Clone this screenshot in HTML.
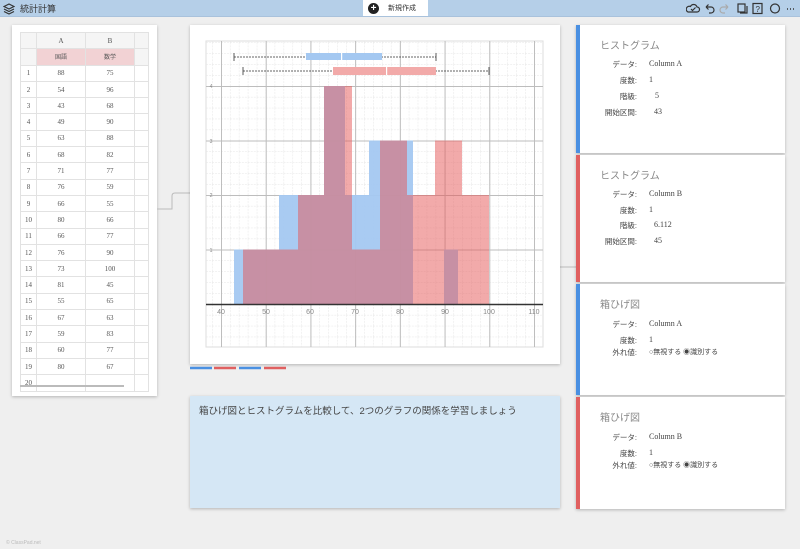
<!DOCTYPE html>
<html><head><meta charset="utf-8"><style>
*{box-sizing:border-box;margin:0;padding:0}
body{width:800px;height:549px;overflow:hidden;background:#efefef;font-family:"Liberation Serif","Noto Serif CJK SC",serif;color:#333;position:relative}
.top{position:absolute;left:0;top:0;width:800px;height:17px;background:#b5cfe8;border-bottom:1px solid #a9c2dc}
.jp{font-family:"Liberation Sans","Noto Sans CJK JP",sans-serif}
.card{position:absolute;background:#fff;box-shadow:0 1px 3px rgba(0,0,0,.25)}
table{border-collapse:collapse;position:absolute;left:8px;top:7px;font-size:7px;color:#555}
td{border:1px solid #e2e2e2;height:16.3px;text-align:center}
.rc{position:absolute;left:576px;width:209px;background:#fff;box-shadow:0 1px 3px rgba(0,0,0,.25)}
.rc .t{position:absolute;left:20px;top:12px;font-size:10px;color:#888}
.rc .l{position:absolute;right:148px;font-size:7.5px;color:#444;text-align:right;white-space:nowrap}
.rc .v{position:absolute;left:69px;font-size:8px;color:#444;white-space:nowrap}
</style></head><body>
<div class="top">
 <svg style="position:absolute;left:3px;top:3px" width="12" height="12" viewBox="0 0 12 12" fill="none" stroke="#333" stroke-width="1.2"><path d="M6 1L11 3.5 6 6 1 3.5Z"/><path d="M1 6L6 8.5 11 6"/><path d="M1 8.5L6 11 11 8.5"/></svg>
 <div class="jp" style="position:absolute;left:20px;top:2px;font-size:9px;color:#333">統計計算</div>
 <div style="position:absolute;left:363px;top:0;width:65px;height:16px;background:#fff"></div>
 <div style="position:absolute;left:368px;top:3px;width:11px;height:11px;border-radius:50%;background:#222;color:#fff;font:bold 10px/11px 'Liberation Sans';text-align:center">+</div>
 <div class="jp" style="position:absolute;left:388px;top:3px;font-size:7px;color:#333">新規作成</div>
 <svg style="position:absolute;left:686px;top:2px" width="112" height="13" viewBox="0 0 112 13" fill="none" stroke="#333" stroke-width="1.2">
  <path d="M2 10h9a2.5 2.5 0 0 0 0-5 3.5 3.5 0 0 0-6.5-.5A2.5 2.5 0 0 0 2 10Z"/><path d="M5 7l1.5 1.5 3-3"/>
  <path d="M20 5h5a3 3 0 0 1 0 6h-2M20 5l2.5-2.5M20 5l2.5 2.5"/>
  <path d="M42 5h-5a3 3 0 0 0 0 6h2M42 5l-2.5-2.5M42 5l-2.5 2.5" stroke="#aaa"/>
  <rect x="52" y="2" width="7" height="8"/><path d="M54 11h7V4"/>
  <rect x="67" y="1.5" width="9" height="10"/><text x="69.5" y="10" font-size="8" fill="#333" stroke="none" font-family="Liberation Sans">?</text>
  <circle cx="89" cy="6.5" r="4.5"/>
  <path d="M101 7h1M104 7h1M107 7h1" stroke-width="1.5"/>
 </svg>
</div>

<div class="card" style="left:12px;top:25px;width:145px;height:371px">
<table>
<tr style="background:#f5f5f5"><td style="width:16px"></td><td style="width:49px">A</td><td style="width:49px">B</td><td style="width:14px"></td></tr>
<tr><td style="background:#f5f5f5"></td><td class="jp" style="background:#f2d2d4;font-size:6px">国語</td><td class="jp" style="background:#f2d2d4;font-size:6px">数学</td><td style="background:#f5f5f5"></td></tr>
<tr><td>1</td><td>88</td><td>75</td><td></td></tr>
<tr><td>2</td><td>54</td><td>96</td><td></td></tr>
<tr><td>3</td><td>43</td><td>68</td><td></td></tr>
<tr><td>4</td><td>49</td><td>90</td><td></td></tr>
<tr><td>5</td><td>63</td><td>88</td><td></td></tr>
<tr><td>6</td><td>68</td><td>82</td><td></td></tr>
<tr><td>7</td><td>71</td><td>77</td><td></td></tr>
<tr><td>8</td><td>76</td><td>59</td><td></td></tr>
<tr><td>9</td><td>66</td><td>55</td><td></td></tr>
<tr><td>10</td><td>80</td><td>66</td><td></td></tr>
<tr><td>11</td><td>66</td><td>77</td><td></td></tr>
<tr><td>12</td><td>76</td><td>90</td><td></td></tr>
<tr><td>13</td><td>73</td><td>100</td><td></td></tr>
<tr><td>14</td><td>81</td><td>45</td><td></td></tr>
<tr><td>15</td><td>55</td><td>65</td><td></td></tr>
<tr><td>16</td><td>67</td><td>63</td><td></td></tr>
<tr><td>17</td><td>59</td><td>83</td><td></td></tr>
<tr><td>18</td><td>60</td><td>77</td><td></td></tr>
<tr><td>19</td><td>80</td><td>67</td><td></td></tr>
<tr><td style="height:13px">20</td><td></td><td></td><td></td></tr>
</table>
<div style="position:absolute;left:8px;top:360px;width:104px;height:2px;background:#bbb"></div>
</div>

<svg style="position:absolute;left:0;top:0" width="800" height="549" fill="none" stroke="#bbb" stroke-width="1">
<path d="M157 209H172V196Q172 193 175 193H190"/>
<path d="M560 267H576"/>
</svg>

<div class="card" style="left:190px;top:25px;width:370px;height:339px"></div>
<svg style="position:absolute;left:0;top:0" width="800" height="549">
<defs>
<pattern id="mn" x="221" y="304" width="8.943" height="10.9" patternUnits="userSpaceOnUse"><path d="M0 0V10.9M0 0H8.943" stroke="#e6e6e6" stroke-width="1" fill="none" stroke-dasharray="2 1"/></pattern>
<pattern id="mj" x="221" y="304" width="44.714" height="54.5" patternUnits="userSpaceOnUse"><path d="M0.5 0V54.5M0 0.5H44.714" stroke="#bdbdbd" stroke-width="1" fill="none"/></pattern>
<clipPath id="cp"><rect x="206" y="41" width="337" height="306"/></clipPath>
</defs>
<rect x="206" y="41" width="337" height="306" fill="#fff" stroke="#ddd"/>
<g clip-path="url(#cp)">
<rect x="206" y="41" width="337" height="306" fill="url(#mn)"/>
<rect x="206" y="41" width="337" height="306" fill="url(#mj)"/>
<g fill="#a4c8f1" fill-opacity=".95">
<rect x="234" y="249.5" width="9" height="54.5"/><rect x="243" y="249.5" width="36" height="54.5"/>
<rect x="279" y="195" width="45" height="109"/><rect x="324" y="86" width="21" height="218"/>
<rect x="345" y="195" width="24" height="109"/><rect x="369" y="140.5" width="44" height="163.5"/>
<rect x="444" y="249.5" width="14" height="54.5"/>
</g>
<g fill="#e55555" fill-opacity=".5">
<rect x="243" y="249.5" width="55" height="54.5"/><rect x="298" y="195" width="26" height="109"/>
<rect x="324" y="86" width="28" height="218"/><rect x="352" y="249.5" width="28" height="54.5"/>
<rect x="380" y="140.5" width="27" height="163.5"/><rect x="407" y="195" width="28" height="109"/>
<rect x="435" y="140.5" width="27" height="163.5"/><rect x="462" y="195" width="27" height="109"/>
</g>
<path d="M206 304.5H543" stroke="#333" stroke-width="1.5"/>
<g stroke="#333" stroke-width=".8" fill="none">
<path d="M234 57H436" stroke-dasharray="2 1"/><path d="M234 53V61M436 53V61"/>
<path d="M243 71H489" stroke-dasharray="2 1"/><path d="M243 67V75M489 67V75"/>
</g>
<rect x="306" y="53" width="76" height="7" fill="#a4c8f1"/><rect x="341" y="53" width="1.2" height="7" fill="#fff"/>
<rect x="333" y="67" width="103" height="8" fill="#f2aaa9"/><rect x="386" y="67" width="1.2" height="8" fill="#fff"/>
<g font-family="Liberation Sans" font-size="7" fill="#888" text-anchor="middle">
<text x="221" y="314">40</text><text x="266" y="314">50</text><text x="310" y="314">60</text><text x="355" y="314">70</text><text x="400" y="314">80</text><text x="445" y="314">90</text><text x="489" y="314">100</text><text x="534" y="314">110</text>
<text x="211" y="252" font-size="5">1</text><text x="211" y="197" font-size="5">2</text><text x="211" y="143" font-size="5">3</text><text x="211" y="88" font-size="5">4</text>
</g>
</g>
<g stroke-width="2.5"><path d="M190 368H212" stroke="#4a90e2"/><path d="M214 368H236" stroke="#e06060"/><path d="M239 368H261" stroke="#4a90e2"/><path d="M264 368H286" stroke="#e06060"/></g>
</svg>

<div class="jp" style="position:absolute;left:190px;top:396px;width:370px;height:112px;background:#d5e7f5;box-shadow:0 1px 3px rgba(0,0,0,.25);padding:7px 9px;font-size:9.5px;color:#444">箱ひげ図とヒストグラムを比較して、2つのグラフの関係を学習しましょう</div>

<div class="rc" style="top:25px;height:128px;border-left:4px solid #4a90e2">
 <div class="t jp">ヒストグラム</div>
 <div class="l jp" style="top:34px">データ:</div><div class="v" style="top:34px">Column A</div>
 <div class="l jp" style="top:50px">度数:</div><div class="v" style="top:50px">1</div>
 <div class="l jp" style="top:66px">階級:</div><div class="v" style="top:66px;left:75px">5</div>
 <div class="l jp" style="top:82px">開始区間:</div><div class="v" style="top:82px;left:74px">43</div>
</div>
<div class="rc" style="top:155px;height:127px;border-left:4px solid #e06060">
 <div class="t jp">ヒストグラム</div>
 <div class="l jp" style="top:34px">データ:</div><div class="v" style="top:34px">Column B</div>
 <div class="l jp" style="top:50px">度数:</div><div class="v" style="top:50px">1</div>
 <div class="l jp" style="top:65px">階級:</div><div class="v" style="top:65px;left:74px">6.112</div>
 <div class="l jp" style="top:81px">開始区間:</div><div class="v" style="top:81px;left:74px">45</div>
</div>
<div class="rc" style="top:284px;height:111px;border-left:4px solid #4a90e2">
 <div class="t jp">箱ひげ図</div>
 <div class="l jp" style="top:35px">データ:</div><div class="v" style="top:35px">Column A</div>
 <div class="l jp" style="top:51px">度数:</div><div class="v" style="top:51px">1</div>
 <div class="l jp" style="top:63px">外れ値:</div><div class="v jp" style="top:63px;font-size:7px">○無視する ◉識別する</div>
</div>
<div class="rc" style="top:397px;height:112px;border-left:4px solid #e06060">
 <div class="t jp">箱ひげ図</div>
 <div class="l jp" style="top:35px">データ:</div><div class="v" style="top:35px">Column B</div>
 <div class="l jp" style="top:51px">度数:</div><div class="v" style="top:51px">1</div>
 <div class="l jp" style="top:63px">外れ値:</div><div class="v jp" style="top:63px;font-size:7px">○無視する ◉識別する</div>
</div>
<div style="position:absolute;left:6px;top:540px;font:5px 'Liberation Sans';color:#bbb">© ClassPad.net</div>
</body></html>
